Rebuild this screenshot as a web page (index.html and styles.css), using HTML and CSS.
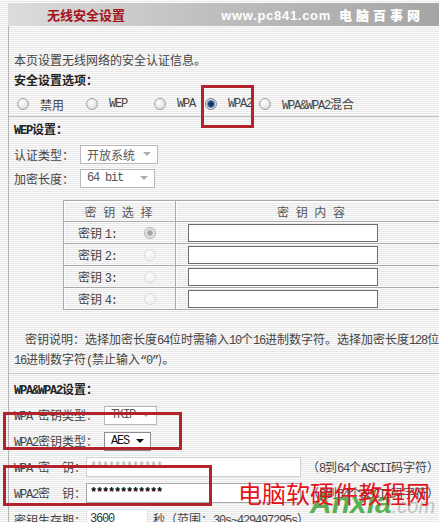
FILE: index.html
```html
<!DOCTYPE html>
<html lang="zh-CN">
<head>
    <meta charset="UTF-8">
    <meta name="viewport" content="width=device-width, initial-scale=1.0">
    <title>无线安全设置</title>
    <link rel="stylesheet" href="styles.css">
</head>
<body>
<div class="page">
    <div class="title-bar">
        <span class="title">无线安全设置</span>
        <span class="site">www.pc841.com<b>电脑百事网</b></span>
    </div>

    <div class="content">
        <div class="intro">本页设置无线网络的安全认证信息。</div>
        <div class="section">安全设置选项：</div>
        <div class="modes">
            <label class="opt"><span class="radio"></span><span>禁用</span></label>
            <label class="opt"><span class="radio"></span><span class="en">WEP</span></label>
            <label class="opt"><span class="radio"></span><span class="en">WPA</span></label>
            <label class="opt"><span class="radio on"></span><span class="en">WPA2</span></label>
            <label class="opt"><span class="radio"></span><span><span class="en">WPA&amp;WPA2</span>混合</span></label>
        </div>

        <!-- WEP -->
        <div class="section wep-title"><span class="en">WEP</span>设置：</div>
        <div class="field wep-row">
            <span class="label">认证类型：</span>
            <span class="select s-auth">开放系统<i class="arrow"></i></span>
        </div>
        <div class="field wep-row">
            <span class="label">加密长度：</span>
            <span class="select s-len"><span class="en">64 bit</span><i class="arrow"></i></span>
        </div>

        <table class="keys">
            <tr>
                <th class="col-sel">密 钥 选 择</th>
                <th>密 钥 内 容</th>
            </tr>
            <tr>
                <td class="col-sel"><span class="key-name">密钥 <span class="en">1:</span></span><span class="radio dim-on"></span></td>
                <td><span class="key-input"></span></td>
            </tr>
            <tr>
                <td class="col-sel"><span class="key-name">密钥 <span class="en">2:</span></span><span class="radio dim"></span></td>
                <td><span class="key-input"></span></td>
            </tr>
            <tr>
                <td class="col-sel"><span class="key-name">密钥 <span class="en">3:</span></span><span class="radio dim"></span></td>
                <td><span class="key-input"></span></td>
            </tr>
            <tr>
                <td class="col-sel"><span class="key-name">密钥 <span class="en">4:</span></span><span class="radio dim"></span></td>
                <td><span class="key-input"></span></td>
            </tr>
        </table>

        <div class="note">
            <div class="note-line first">密钥说明：选择加密长度<span class="en">64</span>位时需输入<span class="en">10</span>个<span class="en">16</span>进制数字符。选择加密长度<span class="en">128</span>位时需输入<span class="en">26</span>个</div>
            <div class="note-line"><span class="en">16</span>进制数字符<span class="en">(</span>禁止输入<span class="en">“0”</span>)。</div>
        </div>

        <!-- WPA / WPA2 -->
        <div class="section wpa-title"><span class="en">WPA&amp;WPA2</span>设置：</div>
        <div class="wpa">
            <div class="field">
                <span class="label"><span class="en">WPA </span>密钥类型：</span>
                <span class="select s-tkip"><span class="en">TKIP</span><i class="arrow"></i></span>
            </div>
            <div class="field">
                <span class="label"><span class="en">WPA2</span>密钥类型：</span>
                <span class="select s-aes"><span class="en">AES</span><i class="arrow"></i></span>
            </div>
            <div class="field">
                <span class="label"><span class="en">WPA </span>密　钥：</span>
                <span class="text-input pw"><span class="en">************</span></span>
                <span class="hint">（<span class="en">8</span>到<span class="en">64</span>个<span class="en">ASCII</span>码字符）</span>
            </div>
            <div class="field">
                <span class="label"><span class="en">WPA2</span>密　钥：</span>
                <span class="text-input pw strong"><span class="en">************</span></span>
                <span class="hint">（<span class="en">8</span>到<span class="en">64</span>个<span class="en">ASCII</span>码字符）</span>
            </div>
            <div class="field">
                <span class="label">密钥生存期：</span>
                <span class="text-input life"><span class="en">3600</span></span>
                <span class="unit">秒（范围：<span class="en">30s~429497295s</span>）</span>
            </div>
        </div>
    </div>

    <!-- annotations drawn over the screenshot -->
    <div class="mark mark-wpa2"></div>
    <div class="mark mark-type"></div>
    <div class="mark mark-key"></div>
    <div class="watermark">
        <span class="wm-logo">Anxia<small>.com</small></span>
        <span class="wm-text">电脑软硬件教程网</span>
    </div>
</div>
</body>
</html>
```

FILE: styles.css
```css
/* Global */
html, body {
    margin: 0;
    padding: 0;
    overflow: hidden;
}

body {
    font-family: "Noto Sans CJK SC", sans-serif;
    font-size: 12px;
    color: #454545;
    background: repeating-linear-gradient(to bottom, #fbfbfb 0, #fbfbfb 1px, #e8e8e8 1px, #e8e8e8 2px);
}

.page {
    position: relative;
    width: 439px;
    height: 522px;
    overflow: hidden;
}

.en {
    font-family: "Liberation Mono", monospace;
    font-size: 12px;
    letter-spacing: -1.2px;
}

/* Title bar */
.title-bar {
    margin: 3px 0 0 8px;
    height: 23px;
    display: flex;
    align-items: center;
    background: linear-gradient(to right, #dcdcdc, #bdbdbd 50%, #a5a5a5);
}

.title {
    margin-left: 39px;
    color: #a3121a;
    font-weight: bold;
    font-size: 13px;
}

.site {
    margin-left: auto;
    margin-right: 15px;
    color: #fff;
    font-family: "Liberation Sans", sans-serif;
    font-weight: bold;
    font-size: 13px;
    letter-spacing: 0.7px;
}

.site b {
    font-family: "Noto Sans CJK SC", sans-serif;
    letter-spacing: 4px;
    margin-left: 8px;
}

/* Content */
.content {
    margin-left: 8px;
    border-left: 1px solid #b4b4b4;
    padding: 24px 0 0 5px;
}

.intro,
.section {
    line-height: 20px;
    height: 20px;
}

.section {
    font-weight: bold;
    color: #222;
}

.section .en {
    font-weight: bold;
}

.modes {
    display: grid;
    grid-template-columns: 69px 68px 51px 54px auto;
    align-items: center;
    height: 24px;
    margin: 2px 0 0 -5px;
    padding-left: 8px;
    border-bottom: 1px solid #c4c4c4;
}

.opt {
    display: flex;
    align-items: center;
    gap: 11px;
    white-space: nowrap;
}

/* Radios */
.radio {
    display: inline-block;
    box-sizing: border-box;
    width: 12px;
    height: 12px;
    border-radius: 50%;
    border: 1px solid #a2a2a2;
    background: radial-gradient(circle at 40% 35%, #fff 0, #e8e8e8 50%, #cfcfcf 100%);
    flex-shrink: 0;
}

.radio.on {
    border-color: #8a8a8a;
    background: radial-gradient(circle, #0f2a48 0, #1c4a78 2.5px, #5f8fbf 3.5px, #e2e2e2 4.5px, #c4c4c4 6px);
}

.radio.dim-on {
    border-color: #b6b6b6;
    background: radial-gradient(circle, #9c9c9c 0, #b0b0b0 2.5px, #e6e6e6 3.5px, #d9d9d9 6px);
}

.radio.dim {
    border-color: #dcdcdc;
    background: radial-gradient(circle at 40% 35%, #fafafa 0, #ececec 100%);
}

/* WEP */
.wep-title {
    margin-top: 2px;
}

.field {
    display: flex;
    align-items: center;
    white-space: nowrap;
}

.wep-row {
    height: 24px;
}

.wep-title + .wep-row {
    margin-top: 3px;
}

.select {
    box-sizing: border-box;
    display: inline-flex;
    align-items: center;
    height: 19px;
    margin-left: 6px;
    padding: 0 6px;
    border: 1px solid #b8b8b8;
    background: #fff;
    color: #555;
}

.arrow {
    margin-left: auto;
    width: 0;
    height: 0;
    border-left: 4px solid transparent;
    border-right: 4px solid transparent;
    border-top: 4px solid #adadad;
}

.s-auth { width: 78px; }
.s-len { width: 75px; }
.s-tkip { width: 53px; }

.s-aes {
    width: 47px;
    border-color: #8d8d8d;
    color: #111;
}

.s-aes .arrow {
    border-top-color: #111;
}

/* Key table */
.keys {
    margin: 10px 0 0 49px;
    width: 386px;
    border-collapse: collapse;
    border: 1px solid #a9a9a9;
    table-layout: fixed;
}

.keys th,
.keys td {
    border: 1px solid #a9a9a9;
    box-shadow: inset 1px 1px 0 #fdfdfd;
    padding: 0;
}

.keys th {
    height: 20px;
    font-weight: normal;
    color: #555;
    letter-spacing: 2px;
}

.keys td {
    height: 21px;
}

.keys .col-sel {
    width: 111px;
}

td.col-sel {
    padding-left: 14px;
    box-sizing: border-box;
}

.key-name {
    display: inline-block;
    width: 66px;
    vertical-align: middle;
}

td.col-sel .radio {
    vertical-align: middle;
}

.key-input {
    display: block;
    box-sizing: border-box;
    width: 190px;
    height: 18px;
    margin-left: 12px;
    border: 1px solid #6e6e6e;
    background: #fff;
}

/* Note */
.note {
    margin: 20px 0 0 -5px;
    padding: 0 0 3px 5px;
    border-bottom: 1px solid #c4c4c4;
    line-height: 17px;
    white-space: nowrap;
}

.note-line.first {
    text-indent: 11px;
}

/* WPA */
.wpa-title {
    margin-top: 5px;
}

.wpa {
    margin-top: 3px;
}

.wpa .field {
    height: 26px;
}

.text-input {
    box-sizing: border-box;
    display: inline-flex;
    align-items: center;
    width: 220px;
    height: 20px;
    padding-left: 3px;
    border: 1px solid #d0d0d0;
    background: #fff;
    color: #aaa;
}

.text-input.strong {
    border-color: #a6a6a6;
    color: #000;
    font-weight: bold;
}

.text-input.strong .en {
    font-weight: bold;
}

.text-input.life {
    width: 62px;
    color: #333;
    border-color: #e2e2e2;
}

.hint {
    margin-left: 6px;
}

.unit {
    margin-left: 5px;
}

/* Annotations */
.mark {
    position: absolute;
    box-sizing: border-box;
    border: 3px solid #b3232a;
}

.mark-wpa2 {
    left: 201px;
    top: 85px;
    width: 53px;
    height: 43px;
}

.mark-type {
    left: 3px;
    top: 412px;
    width: 179px;
    height: 38px;
}

.mark-key {
    left: 3px;
    top: 465px;
    width: 209px;
    height: 41px;
}

.watermark {
    position: absolute;
    left: 236px;
    top: 476px;
    width: 203px;
    height: 46px;
}

.wm-logo {
    position: absolute;
    left: 74px;
    top: 10px;
    font-family: "Liberation Sans", sans-serif;
    font-size: 30px;
    font-weight: bold;
    font-style: italic;
    color: #3fa63a;
    opacity: 0.85;
}

.wm-logo small {
    font-size: 20px;
    font-weight: normal;
    color: #b9b9b9;
}

.wm-text {
    position: absolute;
    left: 2px;
    top: 2px;
    font-size: 24px;
    line-height: 30px;
    color: #e3141c;
    white-space: nowrap;
}
```
